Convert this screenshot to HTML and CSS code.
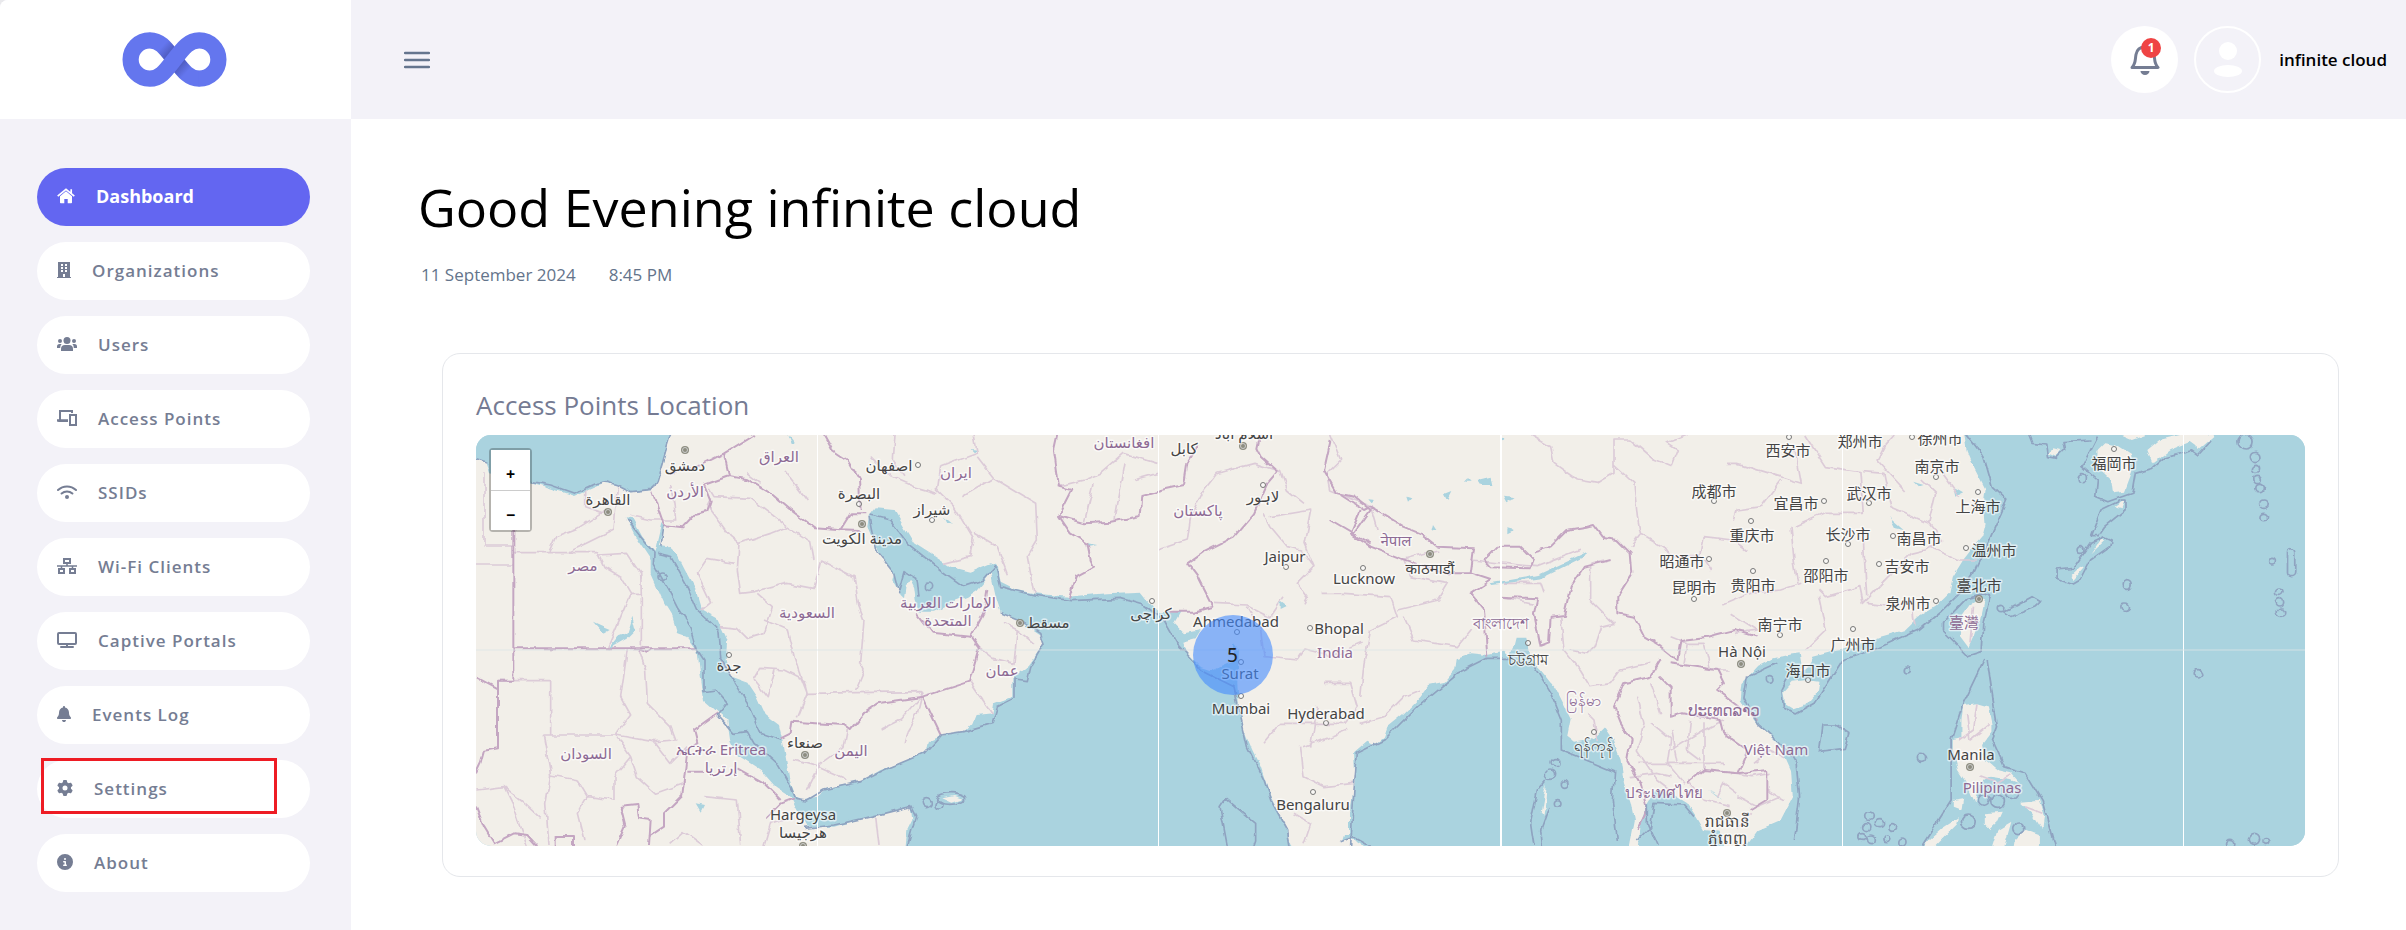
FILE: index.html
```
<!DOCTYPE html>
<html lang="en">
<head>
  <meta charset="utf-8">
  <title>Dashboard</title>
  <link rel="stylesheet" href="styles.css">
</head>
<body>
  <div class="layout">
    <aside class="sidebar">
      <a class="brand" href="#" aria-label="Home">
        <svg class="brand-logo" viewBox="366 95 315 166">
          <defs>
            <linearGradient id="fade1" gradientUnits="userSpaceOnUse" x1="478" y1="128" x2="510" y2="158">
              <stop offset="0.3" stop-color="#6476ee"/>
              <stop offset="1" stop-color="#4f5cc0"/>
            </linearGradient>
            <linearGradient id="fade2" gradientUnits="userSpaceOnUse" x1="568" y1="228" x2="536" y2="198">
              <stop offset="0.3" stop-color="#6476ee"/>
              <stop offset="1" stop-color="#4f5cc0"/>
            </linearGradient>
          </defs>
          <g fill="none" stroke-width="49">
            <path stroke="url(#fade1)" d="M449 120C480 120 496 143 523 178"/>
            <path stroke="url(#fade2)" d="M523 178C550 213 567 236 598 236"/>
            <path stroke="#6476ee" d="M450 120H449A58 58 0 0 0 449 236C480 236 496 213 523 178C550 143 567 120 598 120A58 58 0 0 1 598 236H597"/>
          </g>
        </svg>
      </a>

      <nav class="menu">
        <a class="menu-item active" href="#">
          <svg width="18" height="16" viewBox="0 0 18 16"><path d="M9 3.2 3 8.300V14.500a.8.8 0 0 0 .8.8H7.300V11h3.400v4.300h3.500a.8.8 0 0 0 .8-.8V8.300z"/><path d="M.7 8.200 9 1.400l8.300 6.800M14.200 1.200v4" fill="none" stroke="currentColor" stroke-width="1.700"/></svg>
          <span>Dashboard</span>
        </a>
        <a class="menu-item" href="#">
          <svg width="14" height="16" viewBox="0 0 14 16"><path fill-rule="evenodd" d="M1 0h12v15h1v1H0v-1h1zM4 2v2h2V2zM8 2v2h2V2zM4 5v2h2V5zM8 5v2h2V5zM4 8v2h2V8zM8 8v2h2V8zM6 12v3h2v-3z"/></svg>
          <span>Organizations</span>
        </a>
        <a class="menu-item" href="#">
          <svg width="20" height="16" viewBox="0 0 20 16"><circle cx="10" cy="4.500" r="3.500"/><circle cx="3" cy="5" r="2"/><circle cx="17" cy="5" r="2"/><path d="M4 15v-2a4 4 0 0 1 4-4h4a4 4 0 0 1 4 4v2zM0 12v-1.500A2.500 2.500 0 0 1 2.500 8H4.600A6 6 0 0 0 3.200 12zM20 12v-1.500A2.500 2.500 0 0 0 17.500 8H15.400A6 6 0 0 1 16.800 12z"/></svg>
          <span>Users</span>
        </a>
        <a class="menu-item" href="#">
          <svg width="20" height="16" viewBox="0 0 20 16"><path d="M3 10V1h12v2M0 10.500h11" fill="none" stroke="currentColor" stroke-width="2"/><path d="M0 9.500h11v2.500H2a2 2 0 0 1-2-2z"/><path d="M13 5h6v10h-6z" fill="none" stroke="currentColor" stroke-width="2"/></svg>
          <span>Access Points</span>
        </a>
        <a class="menu-item" href="#">
          <svg width="20" height="16" viewBox="0 0 20 16"><g fill="none" stroke="currentColor" stroke-width="2" stroke-linecap="round"><path d="M1 6a13 13 0 0 1 18 0M4.600 9.500a8 8 0 0 1 10.800 0"/></g><circle cx="10" cy="13" r="2"/></svg>
          <span>SSIDs</span>
        </a>
        <a class="menu-item" href="#">
          <svg width="20" height="16" viewBox="0 0 20 16"><g fill="none" stroke="currentColor" stroke-width="2"><path d="M7 1h6v4H7zM2 11h5v4H2zM13 11h5v4h-5z"/><path d="M0 8h20M10 5v3M4.500 8v3M15.500 8v3" stroke-width="1.500"/></g></svg>
          <span>Wi-Fi Clients</span>
        </a>
        <a class="menu-item" href="#">
          <svg width="20" height="16" viewBox="0 0 20 16"><rect x="1" y="1" width="18" height="11" rx="1" fill="none" stroke="currentColor" stroke-width="2"/><path d="M9 12h2v2h5a1 1 0 0 1 0 2H4a1 1 0 0 1 0-2h5z"/></svg>
          <span>Captive Portals</span>
        </a>
        <a class="menu-item" href="#">
          <svg width="14" height="16" viewBox="0 0 448 512"><path d="M224 0c-17.700 0-32 14.300-32 32V51.200C119 66 64 130.600 64 208v18.800c0 47-17.300 92.400-48.500 127.600l-7.400 8.300c-8.400 9.400-10.400 22.900-5.300 34.400S19.400 416 32 416H416c12.600 0 24-7.400 29.200-18.900s3.100-25-5.300-34.400l-7.400-8.300C401.300 319.200 384 273.900 384 226.800V208c0-77.400-55-142-128-156.800V32c0-17.700-14.300-32-32-32zm45.300 493.300c12-12 18.700-28.300 18.700-45.300H160c0 17 6.700 33.300 18.700 45.300s28.300 18.700 45.300 18.700s33.300-6.700 45.300-18.700z"/></svg>
          <span>Events Log</span>
        </a>
        <a class="menu-item marked" href="#">
          <svg width="16" height="16" viewBox="0 0 512 512"><path d="M495.900 166.600c3.200 8.700 .5 18.400-6.400 24.600l-43.300 39.400c1.100 8.300 1.700 16.800 1.700 25.400s-.6 17.100-1.700 25.400l43.300 39.400c6.900 6.200 9.600 15.900 6.400 24.600c-4.400 11.900-9.700 23.300-15.800 34.300l-4.700 8.100c-6.600 11-14 21.400-22.100 31.200c-5.900 7.200-15.700 9.600-24.500 6.800l-55.700-17.700c-13.400 10.300-28.200 18.900-44 25.400l-12.500 57.100c-2 9.100-9 16.300-18.200 17.800c-13.800 2.300-28 3.500-42.500 3.500s-28.700-1.200-42.500-3.500c-9.200-1.500-16.200-8.700-18.200-17.800l-12.500-57.100c-15.800-6.500-30.600-15.100-44-25.400L83.100 425.900c-8.800 2.800-18.600 .3-24.500-6.800c-8.100-9.800-15.500-20.200-22.100-31.200l-4.700-8.100c-6.100-11-11.400-22.400-15.800-34.300c-3.200-8.700-.5-18.400 6.400-24.600l43.300-39.400C64.600 273.100 64 264.600 64 256s.6-17.100 1.700-25.400L22.400 191.200c-6.900-6.200-9.600-15.900-6.400-24.600c4.400-11.900 9.700-23.300 15.800-34.300l4.700-8.100c6.600-11 14-21.400 22.100-31.200c5.900-7.200 15.700-9.600 24.500-6.800l55.700 17.700c13.400-10.300 28.200-18.900 44-25.400l12.500-57.100c2-9.100 9-16.300 18.200-17.800C227.300 1.200 241.500 0 256 0s28.700 1.200 42.500 3.500c9.200 1.500 16.200 8.700 18.200 17.800l12.500 57.100c15.800 6.500 30.600 15.100 44 25.400l55.700-17.700c8.800-2.800 18.600-.3 24.500 6.800c8.100 9.800 15.500 20.200 22.100 31.200l4.700 8.100c6.100 11 11.400 22.400 15.800 34.300zM256 336a80 80 0 1 0 0-160 80 80 0 1 0 0 160z"/></svg>
          <span>Settings</span>
        </a>
        <a class="menu-item" href="#">
          <svg width="16" height="16" viewBox="0 0 512 512"><path d="M256 512A256 256 0 1 0 256 0a256 256 0 1 0 0 512zM216 336h24V272H216c-13.300 0-24-10.700-24-24s10.700-24 24-24h48c13.300 0 24 10.700 24 24v88h8c13.300 0 24 10.700 24 24s-10.700 24-24 24H216c-13.300 0-24-10.700-24-24s10.700-24 24-24zm40-208a32 32 0 1 1 0 64 32 32 0 1 1 0-64z"/></svg>
          <span>About</span>
        </a>
      </nav>
    </aside>

    <div class="page">
      <header class="topbar">
        <button class="toggle" type="button" aria-label="Toggle menu">
          <svg width="26" height="18" viewBox="0 0 26 18"><path d="M1 2h24M1 9h24M1 16h24" fill="none" stroke="#64758e" stroke-width="2.500" stroke-linecap="round"/></svg>
        </button>
        <div class="account">
          <button class="bell" type="button" aria-label="Notifications">
            <svg width="30" height="30" viewBox="0 0 30 30"><path d="M2 22.500c4-4 3-8 4-13C7 4 11 2 15 2s8 2 9 7.500c1 5 0 9 4 13z" fill="none" stroke="#757d93" stroke-width="3" stroke-linejoin="round"/><path d="M10.500 26h9a4.500 4 0 0 1-9 0z" fill="#757d93"/></svg>
            <span class="count">1</span>
          </button>
          <span class="avatar">
            <svg width="28" height="36" viewBox="0 0 28 36"><circle cx="14" cy="9" r="9" fill="#fff"/><ellipse cx="14" cy="29" rx="14" ry="6" fill="#fff"/></svg>
          </span>
          <span class="user-name">infinite cloud</span>
        </div>
      </header>

      <main class="content">
        <h1>Good Evening infinite cloud</h1>
        <p class="when"><span>11 September 2024</span><span>8:45 PM</span></p>

        <section class="card">
          <h2>Access Points Location</h2>
          <div class="map">
            <svg class="tiles" viewBox="0 0 1829 411" preserveAspectRatio="xMidYMid slice">
              <defs>
                <filter id="rough" filterUnits="userSpaceOnUse" x="-10" y="-10" width="1850" height="431">
                  <feTurbulence type="fractalNoise" baseFrequency="0.08" numOctaves="2" seed="4"/>
                  <feDisplacementMap in="SourceGraphic" scale="6" xChannelSelector="R" yChannelSelector="G"/>
                </filter>
                <clipPath id="west"><rect x="-100" y="-100" width="4031" height="1500"/></clipPath>
                <clipPath id="east"><rect x="3930" y="-100" width="1700" height="1500"/></clipPath>
                <g id="dot"><circle r="2.500" fill="#fff" fill-opacity="0.6" stroke="#777" stroke-width="1"/></g>
                <g id="capital"><circle r="4" fill="#8d8d80"/><circle r="2.500" fill="none" stroke="#ccc" stroke-width="1"/></g>
                <g id="geo">
                  <!-- seas -->
                  <g fill="#aad3df">
                    <path d="M-40-40H615L600 15 580 90 560 150 545 180 480 187 440 165 400 158 350 180 310 198 230 172 185 158 55 130 45 100-40 70z"/>
                    <path d="M465 262L485 265 515 320 552 365 572 280 580 285 565 345 590 348 620 375 640 415 680 490 695 540 740 565 770 630 765 690 775 735 830 755 860 800 885 855 925 885 940 950 955 1040 975 1100
                      1000 1108 1040 1100 1070 1075 1170 1055 1230 1020 1300 995 1365 965 1370 940 1410 915 1370 965 1375 930 1405 918 1480 905 1505 880 1515 855 1565 850 1570 820 1625 800 1625 745 1675 705 1720 640 1715 620 1685 600 1630 560 1590 545 1575 500 1560 430
                      1545 450 1520 480 1490 500 1440 520 1390 545 1350 545 1335 510 1330 470 1320 450 1305 470 1300 505 1290 495 1265 450 1270 430 1225 370 1190 290 1195 260 1215 235 1270 240 1300 290 1330 340 1385 375 1440 410 1500 425 1560 400 1580 405 1590 455 1640 480 1690 490 1790 500 1850 495 1910 490 2010 485 2030 510 2070 550 2130 545 2110 580 2140 610 2190 600 2175 625 2135 635 2145 665 2190 710 2220 720 2265 700 2290 690 2290 640 2305 660 2300 760 2305 830 2320 900 2345 960 2370 1010 2400 1100 2440 1180 2465 1248V1290
                      H2610V1248L2620 1215 2635 1215 2635 1150 2655 1060 2650 970 2690 935 2710 945 2740 920 2750 890 2800 850 2850 800 2875 765 2920 755 2950 720 2955 685 3000 670 3050 675 3100 665 3120 680 3135 620 3170 620 3180 690 3210 720 3250 770 3265 800 3300 870 3290 920 3310 935 3370 925 3405 890 3425 920 3450 990 3460 1060 3480 1120 3490 1170 3475 1248V1290
                      H3500L3505 1248 3510 1180 3530 1120 3555 1080 3610 1095 3650 1120 3680 1165 3700 1200 3750 1205 3760 1248V1290
                      H3825V1248L3860 1200 3930 1170 3965 1100 3960 1020 3930 950 3890 910 3850 870 3810 810 3815 760 3860 710 3910 685 3950 675 3985 670 3990 700 3985 730 4015 700 4025 680 4080 665 4150 650 4220 620 4290 600 4330 560 4380 530 4420 490 4430 440 4460 390 4490 350 4515 320 4525 280 4520 220 4525 180 4490 110 4470 60 4455-40H5520V1290H1305
                      L1305 1248 1310 1200 1325 1170 1320 1130 1240 1150 1180 1165 1090 1190 1010 1190 985 1150 960 1100 915 1070 870 1020 800 975 780 940 770 870 740 845 700 810 690 740 680 660 650 620 620 610 605 560 580 520 540 430 540 390 500 330z"/>
                    <!-- lakes and rivers -->
                    <path d="M370 578L400 592 420 600 400 612zM410 660L440 620 470 610 485 560 495 600 470 625 425 650zM675 1120L700 1125 690 1145zM950 15L975 45 960 45zM3020 150L3060 140 3065 165 3030 165zM3100 200L3135 205 3110 220zM2990 145L2980 155 3000 155zM2920 190L2945 180 2930 210zM2690 208L2710 210 2700 220zM3060 460L3200 435 3350 365 3340 380 3210 445 3065 465zM3710 1075L3755 1110 3740 1095zM4435 175L4460 190 4440 200zM4250 265L4290 300 4265 295zM4315 155L4345 165 4330 170zM1850 340L1880 345 1855 350zM1420 260L1450 285 1430 280zM2430 515L2450 530 2430 540zM2810 200L2825 205 2815 215zM3090 20L3105 30 3090 35zM2890 285L2900 300 2885 305zM3110 295L3130 300 3110 310zM1500 60L1520 62 1510 70z"/>
                  </g>
                  <!-- islands -->
                  <g fill="#f2efe9">
                    <path d="M1415 1105L1450 1098 1478 1107 1445 1118zM2610 1235L2640 1222 2680 1248V1290H2600z"/>
                    <path d="M3935 790L3965 755 4005 750 4040 755 4035 790 4005 825 3970 838 3940 820z"/>
                    <path d="M4505 500L4520 510 4510 560 4490 620 4475 655 4450 620 4455 560 4485 515z"/>
                    <path d="M4460 825L4500 820 4535 830 4545 880 4545 905 4515 945 4525 990 4560 1020 4600 1030 4625 1060 4600 1050 4540 1040 4510 1060 4495 1120 4470 1060 4445 1020 4430 960 4430 930 4455 925 4455 870z"/>
                    <path d="M4350 1240L4400 1195 4445 1165 4440 1185 4380 1248V1290H4340zM4520 1150L4575 1145 4560 1180 4540 1200 4520 1180zM4545 1248L4560 1200 4600 1175 4580 1248V1290H4545zM4625 1115L4680 1110 4695 1160 4690 1200 4660 1150zM4640 1200L4680 1215 4680 1248V1290H4600L4610 1230zM4430 1110L4460 1105 4455 1140 4430 1130z"/>
                    <path d="M4850 60L4870 40 4900 45 4945 75 4950 130 4930 185 4895 190 4890 150 4850 110zM4995 60L5030 30 5090 15V-40H5180L5170 15 5140 50 5120 35 5060 60 5010 100zM4915 15V-40H5000L4990 15 4950 30zM4705 70L4725 55 4745 60 4730 80zM5130 15H5190L5140 60z"/>
                    <path d="M4780 450L4810 415 4800 410 4775 435zM4830 370L4870 330 4860 325zM4900 230L4930 210 4920 235zM3210 1150L3222 1080 3228 1060 3225 1110 3218 1160z"/>
                  </g>
                  <!-- province lines -->
                  <g fill="none" stroke="#dccbd8" stroke-width="5" stroke-linejoin="round">
                    <path d="M40 130V348H128M16 405H128M130 368H380L400 410 450 440 480 490H512V655M480 490L410 655M235 365L255 320 320 295 400 245M295 365L350 340 430 300 440 170M380 375L470 370 510 430 512 490M345 180V230L400 250M475 255L540 270 615 270 610 220 600 170"/>
                    <path d="M82 752H240V915M218 915H435L480 855 450 800 470 660M505 660L525 720 530 820 600 890 615 930 550 935 435 915M218 915L240 1035 225 1120 235 1248M435 915L480 980 430 1040 430 1110 350 1100 320 1150 340 1230M480 980L500 1040 555 1090 640 1060M550 935L600 1000 650 950M20 1080L100 1070 150 1110 210 1165M100 1070L130 1130 170 1248M240 1035L320 1050 350 1100M600 1240L640 1205 700 1248"/>
                    <path d="M715 175L730 200 840 205 900 250 950 290 1020 335 1030 390M720 205L710 225 780 320 805 340 800 420 810 490 850 485 950 460 1030 475 1050 390 1150 440 1165 530 1180 570 1170 700 1180 720 1155 780M805 340L900 310 950 290M690 540L720 515 680 430 710 385 790 400M750 590L800 595 830 625 880 610 905 530 860 490M880 570L950 600 970 680 990 740 1010 790 1355 785 1340 850 1310 900 1300 940M850 750L870 715 940 720 1000 750 1010 790 980 865M850 750L890 800 910 720M1130 900L1120 950 1050 1000 1010 1080M970 990L1040 1010 1130 1050M830 130L870 160M940 120L980 170 1010 210M700 1100L800 1110 810 1248M880 1248L900 1180 960 1160M1215 1160L1225 1248"/>
                    <path d="M1200 80L1260 140 1330 170 1400 190M1270 15L1265 90 1300 140M1410 110L1520 70 1510 15M1410 110L1400 180 1450 230 1510 330 1500 380 1420 400M1475 200L1570 145 1695 220 1700 330 1670 380 1690 490M1570 145L1520 80M1510 310L1580 350 1610 430M1760 170L1840 150 1890 130 1960 70 2060 100M1840 280L1870 160M1930 270L1960 100M1990 150L2060 130M1230 900L1290 870 1360 785M1500 755L1565 850M1510 640L1570 685 1630 700 1640 600 1600 580M1640 600L1690 640"/>
                    <path d="M2060 360L2150 330 2160 260 2200 180 2240 130 2350 100 2430 125 2450 180 2500 220M2380 250L2400 290 2450 350 2490 360 2530 410 2480 460 2510 500 2500 520M2400 260L2520 240 2500 340 2530 410M2230 520L2330 525 2400 560 2440 500M2330 530L2370 600 2380 680 2480 690 2500 660 2580 680 2670 640M2560 760L2640 760 2660 830 2620 880 2510 880 2430 880 2380 940M2490 950L2500 1040 2560 1070 2650 1060M2520 950L2540 830M2630 900L2500 950M2470 1150L2520 1180 2500 1240M2550 490L2620 490 2760 500 2780 560 2700 600 2680 700 2670 800M2780 540L2900 510 2930 460 2820 440 2800 390M2800 560L2830 630 2960 650 3000 600M2670 880L2740 860 2800 800 2850 780"/>
                    <path d="M2580 15L2610 90 2570 130 2580 180 2700 230M2700 230L2720 300M2790 390L2900 360M3000 390L3200 410 3330 360M3090 500L3190 520M3100 460L3210 460 3220 490M3180 15L3240 50 3250 100 3320 150 3380 160 3430 130 3430 30 3480 30 3550 90 3600 110 3620 60 3590 40 3650 15M3430 105L3490 160 3500 260 3510 310 3480 350M3510 310L3580 350 3600 380 3690 380M3690 380L3700 320 3790 330 3830 360M3770 100L3800 100 3930 140 3990 160 3970 50M3790 270L3800 240 3870 230 3930 150M3720 420L3700 390M3755 525L3840 490 3930 480 3990 460M3780 550L3860 600 3790 610M3300 660L3350 670 3370 650 3390 590 3430 580 3360 510 3360 400 3400 390M3270 560L3280 660 3330 720 3360 770 3420 760 3450 720 3540 700M3350 850L3370 870 3380 930"/>
                    <path d="M3600 620L3650 640 3700 640 3720 720 3780 720M3650 640L3640 700M3500 800L3520 880 3500 960 3560 1050 3600 1080M3540 760L3570 850M3600 960L3700 900 3760 870M3620 1000L3600 900M3700 1020V880M3500 1000L3760 1000M3780 1030L3840 1040 3900 1030M3800 1100L3860 1130 3930 1100M3840 1150L3800 1200M3650 1050L3700 1110 3780 1130M3540 880L3600 930 3590 1000 3640 1060M3660 870L3650 960 3690 990M3480 1040L3560 1030 3600 1040M3740 1100L3760 1060 3800 1090M3890 1080L3940 1110M3850 1000L3900 960 3940 980"/>
                    <path d="M4000 15L4060 110 4160 125 4170 250 4060 250 3970 290M4170 125L4230 130 4250 230 4360 280 4380 190 4340 150M4360 280L4400 330 4350 360 4310 370 4170 520 4160 470 4060 500 4040 480M4360 350L4450 390 4500 390M4290 180L4210 90 4230 50 4260 15M4400 130L4450 200M3960 290L3970 400 3980 460M4170 330L4180 500M4180 520L4260 530 4310 510 4320 590M4040 500L4060 600 4000 660M4470 850L4480 930 4540 880M4500 820L4490 900 4450 930M4490 530L4480 640M4510 1040L4560 1060 4600 1035M4640 1130L4690 1150"/>
                  </g>
                  <!-- country borders -->
                  <g fill="none" stroke="#c4a6c2" stroke-width="6" stroke-linejoin="round">
                    <path d="M128 300V752H82V955L40 962 30 1000 16 1030M128 655H680M505 658L530 668 545 658M16 740L82 775M16 1130L40 1190 70 1240 130 1210 170 1215 200 1248M255 1248V1218H310V1248M440 1248L465 1190 450 1130 500 1125 505 1165 540 1170 535 1248M535 1220L580 1190 580 1150 635 1095 650 960 680 940 670 900 740 850M650 1025H700M800 1015L880 1060 930 1110"/>
                    <path d="M545 185L580 285 635 292 670 255 710 245 720 215 700 165 775 138 760 70 700 100 600 130M760 70L850 15M775 138L830 148 900 190 960 240 1030 292 1110 298 1140 250 1190 250M1110 298L1170 300M1060 15L1085 60 1130 90 1165 150 1170 240M930 925L960 910 965 875 1120 885 1140 900 1190 840 1220 820 1355 800 1410 915M1355 800L1495 755 1525 655 1500 620 1385 608 1340 550M1500 620L1540 545 1550 480M885 1165L930 1120 970 1105"/>
                    <path d="M1760 15L1750 60 1765 170 1805 180 1765 258 1840 280 1920 275 2010 258 2015 195 2070 180 2140 165 2150 100 2180 50M1765 258L1800 310 1850 340 1860 390 1870 410 1815 440 1795 505M2370 15L2360 60 2370 80 2420 125 2390 160 2350 250 2290 320 2200 365 2150 400 2180 440 2200 480 2225 530 2170 545 2090 545M2580 30L2560 120 2600 190 2650 200 2700 240 2650 310M2580 270L2700 340"/>
                    <path d="M2610 195L2680 240 2700 230 2800 290 2850 310 2900 350 3010 355 3000 430 2920 430 2790 385 2700 350 2640 310 2670 240M3040 390L3080 350 3150 350 3190 390 3180 415 3060 412 3040 390M3190 365L3240 350 3290 300 3350 290 3370 285 3400 325 3440 330 3480 370 3485 430 3440 500 3440 550 3490 560 3520 620 3570 650 3620 690 3630 630 3710 620 3790 600 3860 620M3000 430L3060 450 3000 490 3040 540 3050 680M3090 500L3200 505 3190 550 3210 650 3235 640 3240 560 3280 555 3300 470 3340 410 3420 390M3570 690L3540 740 3460 760 3430 830 3450 880 3480 930 3470 990 3510 1060 3530 1140 3500 1200M3570 740L3600 770 3600 860 3640 850 3750 870 3760 910 3830 960 3800 1030 3700 1020 3650 1060M3800 1030L3890 1020 3890 1110 3840 1140M3740 720L3760 760 3740 780 3860 870M3600 700L3740 720"/>
                  </g>
                  <!-- sea limits -->
                  <g fill="none" stroke="#8fa3c0" stroke-width="5" stroke-linejoin="round">
                    <path d="M-10 80L50 100M185 155L240 165 310 190 370 162 410 155 440 165 480 185 545 178 560 150 600 15M470 270L510 320 550 370 548 400 600 490 620 530 660 590 680 660 700 690 700 785 735 780 770 820 740 855 790 910 830 905 850 940 920 1000 960 1070 975 1105 1010 1110 1060 1080 1170 1055 1240 1020 1360 970 1410 915 1480 905 1565 880 1580 830 1630 805 1630 750 1670 755 1680 710 1720 640 1710 610 1650 570 1590 545M560 370L600 380 650 470 680 540 745 600 750 680 780 740 830 820 870 910 930 930M570 350L580 285M1200 255L1260 270 1310 340 1410 420 1480 470 1540 450 1575 410 1590 470 1690 495 1800 512 1950 505 2020 525 2080 570 2120 640 2190 720 2290 770 2310 860 2330 950 2380 1050 2400 1110 2450 1200 2460 1260M1195 260L1215 360 1270 430 1285 490M1285 480L1300 425 1340 450 1345 500M1000 1195L1090 1185 1180 1165 1320 1130 1335 1160 1310 1248"/>
                    <path d="M2640 1248L2650 1080 2660 970 2740 930 2840 830 2960 730 3050 685H3130M3190 710L3240 790 3272 870 3272 960 3432 1025 3425 1110 3440 1230M2265 1105L2355 1180 2355 1230 2345 1260M2265 1105L2248 1130 2270 1248M3500 1230L3540 1190 3550 1120 3640 1125 3670 1160M3530 1120L3530 1180 3560 1248M3180 1180L3200 1080 3225 1050M3180 1180L3190 1248M3235 1130L3210 1200 3215 1248M3920 700L3830 740 3820 800 3860 880 3950 960 3975 1000 3985 1100 3970 1230M3950 740L3930 780 3935 830 3975 852 4030 820 4110 690 4200 660 4330 600 4400 540 4450 490 4490 430 4540 320 4587 210 4545 170 4520 80 4460 0M4050 885L4090 885 4128 910 4115 955 4040 965zM4400 580L4470 505 4540 490 4520 580 4515 665 4475 678 4400 600z"/>
                    <path d="M4520 690L4460 820 4425 930 4425 1110 4340 1248M4530 690L4550 830 4560 890 4545 930 4580 1010 4640 1030 4690 1115 4725 1248M4650 15L4660 40 4700 45 4705 80 4730 85 4755 60 4750 35 4830 30M4850 20L4805 110 4850 150 4845 200 4880 215 4950 190 4960 130 5010 115 5050 80 5120 60 5140 75 5180 30M4920 210L4930 210 4930 240 4870 290 4850 320 4830 320 4860 240zM4870 320L4890 330 4885 350 4830 390 4800 450 4780 462 4730 445 4730 420 4780 415 4830 340zM4580 545L4660 500 4685 515 4670 530 4600 560zM2610 1235L2650 1220 2700 1248"/>
                    <g>
                      <circle cx="576" cy="440" r="11"/><circle cx="1375" cy="470" r="11"/><circle cx="1367" cy="1118" r="15"/><circle cx="1405" cy="1125" r="12"/><ellipse cx="1440" cy="1107" rx="42" ry="16"/>
                      <circle cx="3253" cy="998" r="12"/><circle cx="3238" cy="1034" r="14"/><circle cx="3282" cy="1065" r="10"/><circle cx="3264" cy="1119" r="10"/><circle cx="3897" cy="747" r="10"/>
                      <circle cx="4295" cy="720" r="9"/><circle cx="4339" cy="985" r="12"/><circle cx="4806" cy="143" r="12"/><circle cx="4801" cy="360" r="10"/><circle cx="4570" cy="534" r="11"/><circle cx="4935" cy="462" r="13"/><circle cx="4932" cy="533" r="11"/><circle cx="5145" cy="733" r="11"/>
                      <circle cx="5280" cy="35" r="22"/><circle cx="5308" cy="81" r="14"/><circle cx="5309" cy="118" r="12"/><circle cx="5315" cy="150" r="11"/><circle cx="5321" cy="174" r="11"/><circle cx="5332" cy="224" r="11"/><circle cx="5333" cy="261" r="11"/><circle cx="5357" cy="392" r="10"/><rect x="5402" y="356" width="24" height="84" rx="12"/><circle cx="5375" cy="485" r="11"/><circle cx="5377" cy="517" r="11"/><circle cx="5383" cy="545" r="11"/>
                      <circle cx="4188" cy="1160" r="11"/><circle cx="4180" cy="1190" r="12"/><circle cx="4217" cy="1178" r="12"/><circle cx="4254" cy="1191" r="10"/><circle cx="4167" cy="1221" r="10"/><circle cx="4192" cy="1228" r="13"/><circle cx="4240" cy="1228" r="10"/><circle cx="4285" cy="1236" r="12"/><circle cx="5306" cy="1228" r="15"/><circle cx="5341" cy="1236" r="10"/><circle cx="5237" cy="1243" r="12"/><circle cx="4475" cy="1175" r="20"/><circle cx="4520" cy="1110" r="16"/><circle cx="4560" cy="1115" r="20"/><circle cx="4600" cy="1090" r="18"/><circle cx="4620" cy="1195" r="16"/>
                    </g>
                  </g>
                </g>
              </defs>
              <g filter="url(#rough)">
                <rect x="-20" y="-20" width="1870" height="450" fill="#f2efe9"/>
                <g transform="scale(0.33333) translate(-16 -15)">
                  <g clip-path="url(#west)"><use href="#geo"/></g>
                  <!-- the eastern sheet is drawn at a slightly wider scale -->
                  <g transform="translate(3930 0) scale(1.033 1) translate(-3930 0)" clip-path="url(#east)"><use href="#geo"/></g>
                </g>
              </g>
              <!-- tile seams -->
              <g fill="#fff">
                <rect x="341" width="1" height="411"/><rect x="682" width="1" height="411"/><rect x="1024" width="2" height="411"/><rect x="1366" width="1" height="411"/><rect x="1707" width="1" height="411"/>
                <rect y="214" width="1829" height="2" fill="#dde6e6" fill-opacity="0.4"/>
              </g>
              <use href="#capital" x="209" y="15"/><use href="#capital" x="132" y="77"/><use href="#capital" x="386" y="89"/><use href="#capital" x="329" y="320"/><use href="#capital" x="327" y="411"/><use href="#capital" x="544" y="188"/><use href="#capital" x="767" y="11"/><use href="#capital" x="954" y="119"/><use href="#capital" x="1265" y="229"/><use href="#capital" x="1251" y="378"/><use href="#capital" x="1503" y="164"/><use href="#capital" x="1494" y="332"/>
              <use href="#dot" x="442" y="30"/><use href="#dot" x="383" y="69"/><use href="#dot" x="456" y="85"/><use href="#dot" x="253" y="220"/><use href="#dot" x="676" y="166"/><use href="#dot" x="787" y="50"/><use href="#dot" x="810" y="132"/><use href="#dot" x="887" y="133"/><use href="#dot" x="834" y="193"/><use href="#dot" x="761" y="197"/><use href="#dot" x="765" y="227"/><use href="#dot" x="765" y="261"/><use href="#dot" x="850" y="288"/><use href="#dot" x="837" y="357"/><use href="#dot" x="1052" y="208"/><use href="#dot" x="1118" y="297"/><use href="#dot" x="1238" y="66"/><use href="#dot" x="1275" y="86"/><use href="#dot" x="1233" y="124"/><use href="#dot" x="1218" y="164"/><use href="#dot" x="1277" y="136"/><use href="#dot" x="1304" y="200"/><use href="#dot" x="1332" y="245"/><use href="#dot" x="1313" y="2"/><use href="#dot" x="1436" y="2"/><use href="#dot" x="1460" y="42"/><use href="#dot" x="1393" y="68"/><use href="#dot" x="1502" y="57"/><use href="#dot" x="1348" y="66"/><use href="#dot" x="1372" y="109"/><use href="#dot" x="1417" y="101"/><use href="#dot" x="1490" y="113"/><use href="#dot" x="1403" y="129"/><use href="#dot" x="1350" y="126"/><use href="#dot" x="1460" y="166"/><use href="#dot" x="1377" y="194"/><use href="#dot" x="1638" y="14"/>
              <g class="place">
                <text x="209" y="36">دمشق</text>
                <text x="132" y="70">القاهرة</text>
                <text x="413" y="36">اصفهان</text>
                <text x="383" y="64">البصرة</text>
                <text x="386" y="109">مدينة الكويت</text>
                <text x="456" y="80">شیراز</text>
                <text x="253" y="236">جدة</text>
                <text x="329" y="313">صنعاء</text>
                <text x="327" y="385">Hargeysa</text>
                <text x="327" y="403">هرجيسا</text>
                <text x="572" y="193">مسقط</text>
                <text x="675" y="184">کراچی</text>
                <text x="708" y="19">کابل</text>
                <text x="768" y="4">اسلام آباد</text>
                <text x="787" y="67">لاہور</text>
                <text x="809" y="127">Jaipur</text>
                <text x="888" y="149">Lucknow</text>
                <text x="863" y="199">Bhopal</text>
                <text x="760" y="192">Ahmedabad</text>
                <text x="764" y="244">Surat</text>
                <text x="765" y="279">Mumbai</text>
                <text x="850" y="284">Hyderabad</text>
                <text x="837" y="375">Bengaluru</text>
                <text x="954" y="139">काठमाडौं</text>
                <text x="1052" y="230">চট্টগ্রাম</text>
                <text x="1118" y="316">ရန်ကုန်</text>
                <text x="1238" y="62">成都市</text>
                <text x="1276" y="106">重庆市</text>
                <text x="1206" y="132">昭通市</text>
                <text x="1218" y="158">昆明市</text>
                <text x="1277" y="156">贵阳市</text>
                <text x="1304" y="195">南宁市</text>
                <text x="1266" y="222">Hà Nội</text>
                <text x="1332" y="241">海口市</text>
                <text x="1312" y="21">西安市</text>
                <text x="1384" y="12">郑州市</text>
                <text x="1464" y="9">徐州市</text>
                <text x="1461" y="37">南京市</text>
                <text x="1393" y="64">武汉市</text>
                <text x="1502" y="77">上海市</text>
                <text x="1320" y="74">宜昌市</text>
                <text x="1372" y="105">长沙市</text>
                <text x="1443" y="109">南昌市</text>
                <text x="1518" y="121">温州市</text>
                <text x="1431" y="137">吉安市</text>
                <text x="1350" y="146">邵阳市</text>
                <text x="1503" y="156">臺北市</text>
                <text x="1432" y="174">泉州市</text>
                <text x="1377" y="215">广州市</text>
                <text x="1638" y="34">福岡市</text>
                <text x="1495" y="325">Manila</text>
                <text x="1251" y="392">រាជធានី</text>
                <text x="1251" y="409">ភ្នំពេញ</text>
              </g>
              <g class="place country">
                <text x="303" y="27">العراق</text>
                <text x="209" y="62">الأردن</text>
                <text x="107" y="136">مصر</text>
                <text x="331" y="183">السعودية</text>
                <text x="110" y="324">السودان</text>
                <text x="245" y="320">ኤርትራ Eritrea</text>
                <text x="245" y="338">إرتريا</text>
                <text x="375" y="321">اليمن</text>
                <text x="480" y="43">ایران</text>
                <text x="648" y="13">افغانستان</text>
                <text x="722" y="81">پاکستان</text>
                <text x="472" y="173">الإمارات العربية</text>
                <text x="472" y="191">المتحدة</text>
                <text x="526" y="241">عمان</text>
                <text x="859" y="223">India</text>
                <text x="920" y="111">नेपाल</text>
                <text x="1025" y="194">বাংলাদেশ</text>
                <text x="1107" y="271">မြန်မာ</text>
                <text x="1248" y="281">ປະເທດລາວ</text>
                <text x="1300" y="320">Việt Nam</text>
                <text x="1188" y="363">ประเทศไทย</text>
                <text x="1488" y="193">臺灣</text>
                <text x="1516" y="358">Pilipinas</text>
              </g>
            </svg>
            <div class="zoom">
              <button type="button" aria-label="Zoom in">+</button>
              <button type="button" aria-label="Zoom out">−</button>
            </div>
            <button class="cluster" type="button">5</button>
          </div>
        </section>
      </main>
    </div>
  </div>
</body>
</html>
```
FILE: styles.css
```
*, *::after {
  box-sizing: border-box;
}

body {
  margin: 0;
  font-family: "Open Sans", "Noto Sans", sans-serif;
  font-size: 16px;
  color: #000;
  background: #e9e9ec;
}

h1, h2, p {
  margin: 0;
  font-weight: 400;
}

button {
  padding: 0;
  border: 0;
  font: inherit;
  cursor: pointer;
}

a {
  color: inherit;
  text-decoration: none;
}

.layout {
  display: flex;
  min-height: 100vh;
  background: #fff;
  border-top-left-radius: 8px;
  overflow: hidden;
}

/* sidebar */
.sidebar {
  flex: 0 0 351px;
  background: #f3f2f8;
}

.brand {
  display: flex;
  align-items: center;
  justify-content: center;
  height: 119px;
  padding-right: 2px;
  background: #fff;
}

.brand-logo {
  width: 105px;
  height: 55px;
}

.menu {
  display: flex;
  flex-direction: column;
  gap: 16px;
  padding: 49px 41px 0 37px;
}

.menu-item {
  position: relative;
  display: flex;
  align-items: center;
  gap: 21px;
  height: 58px;
  padding: 0 20px 2px;
  border-radius: 29px;
  background: #fff;
  color: #757d93;
  font-size: 17px;
  font-weight: 600;
  letter-spacing: 1px;
}

.menu-item svg {
  fill: currentColor;
}

.menu-item.active {
  background: #6366f1;
  color: #fff;
  font-size: 18px;
  font-weight: 700;
  letter-spacing: 0;
}

.menu-item.marked::after {
  content: "";
  position: absolute;
  top: -2px;
  left: 4px;
  right: 33px;
  height: 56px;
  border: 3px solid #ee1c24;
}

/* top bar */
.page {
  flex: 1;
  min-width: 0;
}

.topbar {
  display: flex;
  align-items: center;
  justify-content: space-between;
  height: 119px;
  padding: 0 19px 0 53px;
  background: #f3f2f8;
}

.toggle {
  display: flex;
  background: none;
}

.account {
  display: flex;
  align-items: center;
  gap: 16px;
}

.bell, .avatar {
  display: flex;
  align-items: center;
  justify-content: center;
  width: 67px;
  height: 67px;
  border-radius: 50%;
}

.bell {
  position: relative;
  background: #fff;
}

.count {
  position: absolute;
  top: 12px;
  left: 30px;
  width: 20px;
  border-radius: 50%;
  background: #ef4444;
  color: #fff;
  font-size: 12px;
  font-weight: 700;
  line-height: 20px;
}

.avatar {
  border: 2px solid #fff;
}

.user-name {
  padding-left: 2px;
  font-size: 17px;
  font-weight: 600;
}

/* content */
.content {
  padding: 52px 67px 53px;
}

h1 {
  font-size: 52px;
  line-height: 72px;
}

.when {
  display: flex;
  gap: 33px;
  margin-top: 20px;
  padding-left: 3px;
  color: #64748b;
  font-size: 17px;
  line-height: 24px;
}

.card {
  margin: 66px 0 0 24px;
  padding: 32px 33px 30px;
  border: 1px solid #e5e7eb;
  border-radius: 18px;
}

h2 {
  color: #757b93;
  font-size: 26px;
  line-height: 38px;
}

.map {
  position: relative;
  height: 411px;
  margin-top: 11px;
  border-radius: 15px;
  background: #aad3df;
  overflow: hidden;
}

.tiles {
  display: block;
  width: 100%;
  height: 100%;
}

.place {
  fill: #444;
  stroke: #fff;
  stroke-opacity: 0.6;
  stroke-width: 3px;
  stroke-linejoin: round;
  paint-order: stroke;
  font-family: "Noto Sans", "DejaVu Sans", "Noto Sans CJK SC", sans-serif;
  font-size: 15px;
  text-anchor: middle;
}

.country {
  fill: #8d6a94;
}

.zoom {
  position: absolute;
  top: 13px;
  left: 13px;
  display: flex;
  flex-direction: column;
  width: 43px;
  border: 2px solid rgba(0, 0, 0, 0.25);
  border-radius: 4px;
  background-clip: padding-box;
}

.zoom button {
  height: 40px;
  padding-top: 8px;
  background: #fff;
  color: #000;
  font-size: 16px;
  font-weight: 700;
}

.zoom button + button {
  border-top: 1px solid #ccc;
}

.cluster {
  position: absolute;
  top: 180px;
  left: calc(50% - 198px);
  width: 80px;
  height: 80px;
  border-radius: 50%;
  background: rgba(66, 139, 255, 0.6);
  color: #222;
  font-family: "Noto Sans", sans-serif;
  font-size: 19px;
}
```
